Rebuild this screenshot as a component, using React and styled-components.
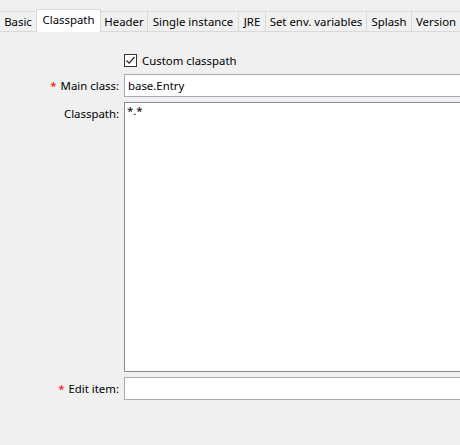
import React from 'react';
import styled, { createGlobalStyle } from 'styled-components';

const GlobalStyle = createGlobalStyle`
  html, body {
    margin: 0;
    padding: 0;
    background: #f0f0f0;
    overflow: hidden;
  }
  body {
    font-family: "Noto Sans", "Open Sans", sans-serif;
    font-size: 11.4px;
    color: #000;
  }
`;

const Window = styled.div`
  width: 460px;
  height: 445px;
  overflow: hidden;
  background: #f0f0f0;
`;

const TabStrip = styled.div`
  display: flex;
  align-items: flex-end;
  height: 31px;
  border-bottom: 1px solid #d9d9d9;
  white-space: nowrap;
`;

const Tab = styled.div`
  position: relative;
  flex: 0 0 ${p => p.$w}px;
  box-sizing: border-box;
  height: ${p => (p.$active ? 23 : 20)}px;
  margin-left: -1px;
  margin-bottom: ${p => (p.$active ? -1 : 0)}px;
  border: 1px solid #d9d9d9;
  border-bottom: none;
  background: ${p => (p.$active ? '#fff' : '#f0f0f0')};
  z-index: ${p => (p.$active ? 1 : 0)};
  display: flex;
  align-items: center;
  justify-content: ${p => (p.$last ? 'flex-start' : 'center')};
  padding-left: ${p => (p.$last ? 4 : 0)}px;
  padding-bottom: ${p => (p.$active ? 2 : 0)}px;
  line-height: 1;

  &:first-child {
    margin-left: 0;
    border-left: none;
  }
`;

const Form = styled.div`
  display: grid;
  grid-template-columns: 119px 420px;
  column-gap: 5px;
  row-gap: 5px;
  margin-top: 19px;
`;

const CheckRow = styled.label`
  grid-column: 2;
  height: 18px;
  display: flex;
  align-items: center;
  gap: 5px;
`;

const Box = styled.span`
  width: 13px;
  height: 13px;
  box-sizing: border-box;
  border: 1px solid #333;
  background: #fff;
  display: flex;
  align-items: center;
  justify-content: center;
`;

const Label = styled.div`
  height: 23px;
  line-height: 23px;
  text-align: right;
  white-space: nowrap;
`;

const Star = styled.span`
  color: #ff0000;
  margin-right: 4px;
`;

const Field = styled.div`
  box-sizing: border-box;
  height: ${p => p.$h || 23}px;
  border: 1px solid ${p => (p.$dark ? '#8a8a96' : '#a9a9ae')};
  background: #fff;
  padding: ${p => (p.$multi ? '0 2px' : '0 3px')};
  line-height: ${p => (p.$multi ? '15px' : '21px')};
  white-space: nowrap;
`;

const tabs = [
  ['Basic', 37],
  ['Classpath', 65, true],
  ['Header', 48],
  ['Single instance', 92],
  ['JRE', 28],
  ['Set env. variables', 102],
  ['Splash', 46],
  ['Version', 60],
];

export default function App() {
  return (
    <Window>
      <GlobalStyle />
      <TabStrip>
        {tabs.map(([name, w, active], i) => (
          <Tab key={name} $w={w} $active={active} $last={i === tabs.length - 1}>{name}</Tab>
        ))}
      </TabStrip>
      <Form>
        <CheckRow>
          <Box>
            <svg width="11" height="11" viewBox="0 0 11 11">
              <path d="M1.5 5.5 L4.2 8.2 L9.5 2" fill="none" stroke="#222" strokeWidth="1.2" />
            </svg>
          </Box>
          Custom classpath
        </CheckRow>

        <Label><Star>*</Star>Main class:</Label>
        <Field>base.Entry</Field>

        <Label>Classpath:</Label>
        <Field $h={270} $multi $dark>*.*</Field>

        <Label><Star>*</Star>Edit item:</Label>
        <Field />
      </Form>
    </Window>
  );
}
